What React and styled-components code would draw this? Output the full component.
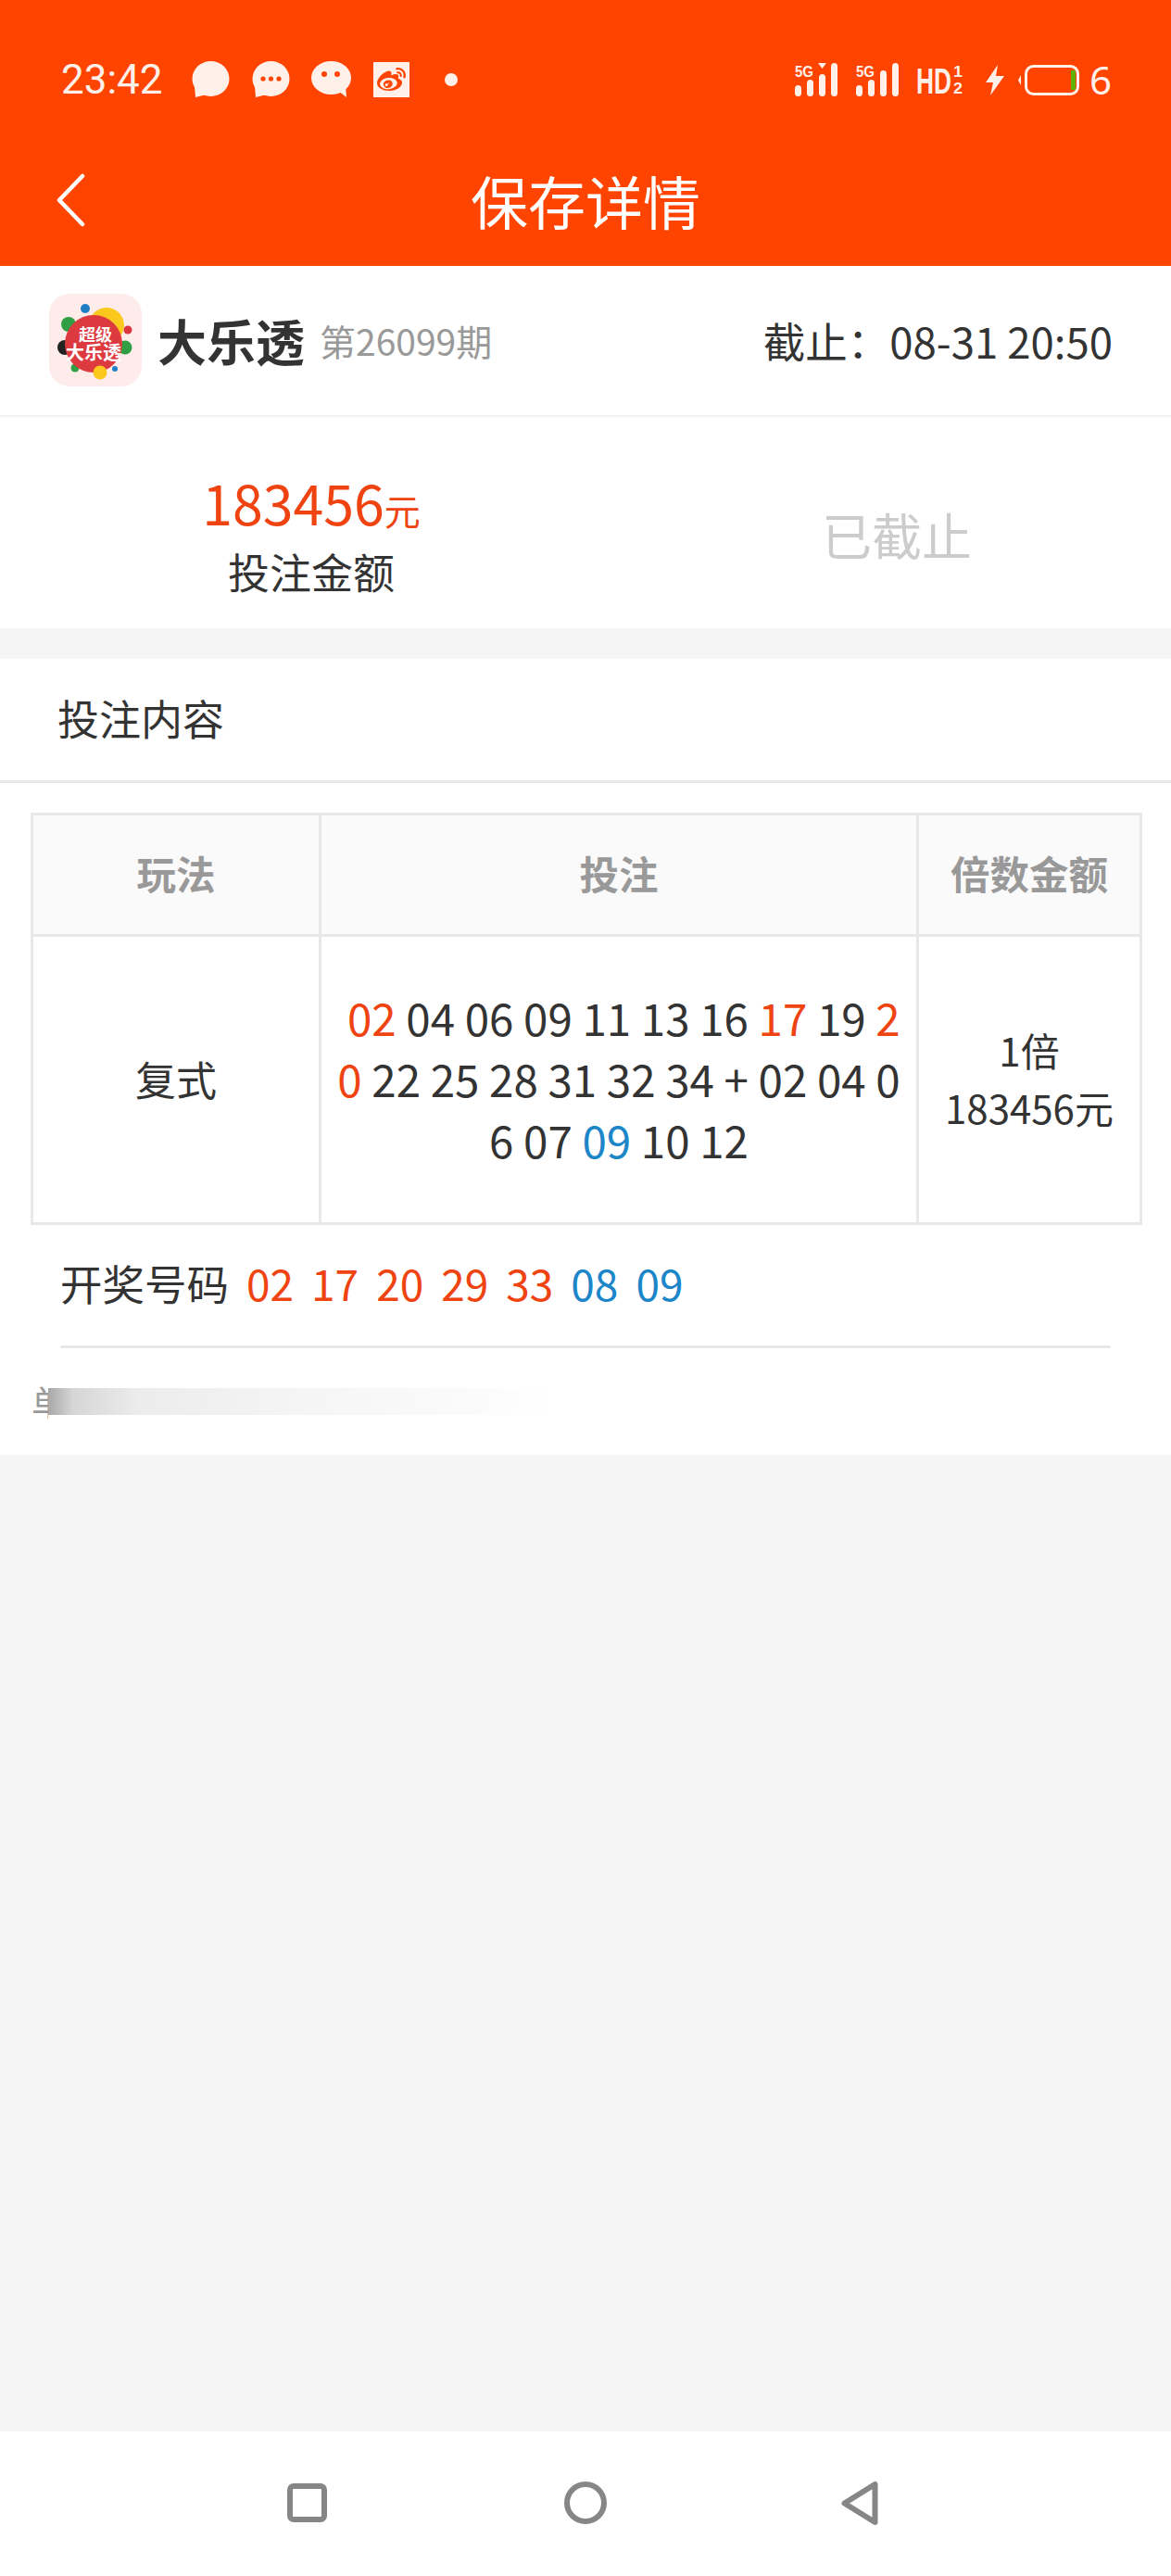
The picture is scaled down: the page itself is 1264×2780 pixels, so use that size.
import React from 'react';
import styled, { createGlobalStyle } from 'styled-components';
import { FaWeibo } from 'react-icons/fa';

const ORANGE = '#ff4400';
const RED = '#ef4311';
const BLUE = '#1c86c9';
const TINT = '#fff0ea';

const GlobalStyle = createGlobalStyle`
  html, body {
    margin: 0;
    padding: 0;
    background: #f5f5f5;
  }
  body {
    font-family: "Noto Sans CJK SC", "Noto Sans", sans-serif;
    color: #333;
  }
  * {
    box-sizing: border-box;
  }
`;

const Page = styled.div`
  display: flex;
  flex-direction: column;
  width: 1264px;
  height: 2780px;
`;

const Header = styled.header`
  background: ${ORANGE};
  height: 287px;
  flex: none;
`;

const StatusBar = styled.div`
  display: flex;
  align-items: center;
  justify-content: space-between;
  height: 172px;
  padding: 0 64px 0 66px;
`;

const StatusGroup = styled.div`
  display: flex;
  align-items: center;
`;

const Time = styled.span`
  font-family: Roboto, sans-serif;
  font-size: 44px;
  line-height: 44px;
  color: ${TINT};
  margin-right: 31px;
`;

const StatusIcon = styled.svg`
  display: block;
  flex: none;
  margin-left: ${({ $ml }) => $ml || 0}px;
`;

const WeiboBox = styled.div`
  display: flex;
  align-items: center;
  justify-content: center;
  width: 39px;
  height: 38px;
  margin-left: 23px;
  background: ${TINT};
  color: ${ORANGE};
  font-size: 31px;
`;

const Dot = styled.span`
  width: 14px;
  height: 14px;
  margin-left: 38px;
  border-radius: 50%;
  background: ${TINT};
`;

const BatteryNumber = styled.span`
  font-family: "Noto Sans", sans-serif;
  font-size: 42px;
  line-height: 42px;
  color: ${TINT};
  margin-left: 11px;
`;

const NavBar = styled.div`
  display: grid;
  grid-template-columns: 1fr auto 1fr;
  align-items: center;
  height: 115px;
  padding: 0 60px 28px;
`;

const BackIcon = styled.svg`
  display: block;
`;

const Title = styled.h1`
  margin: 0;
  font-size: 62px;
  line-height: 80px;
  font-weight: 400;
  color: #fff;
`;

const IssueRow = styled.div`
  display: flex;
  align-items: center;
  height: 163px;
  padding: 0 63px 2px 53px;
  background: #fff;
  border-bottom: 2px solid #f2f2f2;
`;

const LogoMark = styled.svg`
  display: block;
  flex: none;
  margin-right: 17px;
`;

const LotteryName = styled.strong`
  font-size: 53px;
  line-height: 70px;
  font-weight: 700;
`;

const IssueNo = styled.span`
  margin-left: 16px;
  font-size: 39px;
  line-height: 60px;
  color: #999;
`;

const Deadline = styled.span`
  margin-left: auto;
  font-size: 45.5px;
  line-height: 60px;
`;

const Summary = styled.section`
  display: grid;
  grid-template-columns: 672px 1fr;
  height: 228px;
  background: #fff;
`;

const SummaryCell = styled.div`
  display: flex;
  flex-direction: column;
  align-items: center;
  justify-content: center;
  padding-top: 25px;
`;

const Amount = styled.div`
  height: 73px;
  line-height: 73px;
  font-size: 59px;
  color: ${RED};
  white-space: nowrap;
`;

const Unit = styled.span`
  font-size: 39px;
`;

const AmountLabel = styled.div`
  margin-top: 8px;
  font-size: 45px;
  line-height: 62px;
`;

const ClosedText = styled.div`
  font-size: 54px;
  line-height: 70px;
  color: #ccc;
`;

const Content = styled.section`
  margin-top: 33px;
  height: 859px;
  flex: none;
  background: #fff;
`;

const SectionTitle = styled.h2`
  display: flex;
  align-items: center;
  height: 134px;
  margin: 0;
  padding: 0 0 4px 62px;
  font-size: 45px;
  font-weight: 400;
  border-bottom: 3px solid #e8e8e8;
`;

const BetTable = styled.div`
  display: grid;
  grid-template-columns: 311px 645px 241px;
  grid-template-rows: 131px 311px;
  width: 1200px;
  margin: 32px 0 0 33px;
  border-top: 3px solid #e8e8e8;
  border-left: 3px solid #e8e8e8;
`;

const HeadCell = styled.div`
  display: flex;
  align-items: center;
  justify-content: center;
  padding-bottom: 6px;
  background: #fafafa;
  border-right: 3px solid #e8e8e8;
  border-bottom: 3px solid #e8e8e8;
  font-size: 42.5px;
  font-weight: 700;
  color: #999;
`;

const BodyCell = styled.div`
  display: flex;
  align-items: center;
  justify-content: center;
  padding-bottom: 3px;
  border-right: 3px solid #e8e8e8;
  border-bottom: 3px solid #e8e8e8;
  font-size: 44px;
`;

const Numbers = styled.div`
  width: 616px;
  font-size: 47.5px;
  line-height: 66px;
  text-align: center;
  word-break: break-all;
`;

const Ball = styled.span`
  color: ${({ $blue }) => ($blue ? BLUE : RED)};
`;

const Stake = styled.div`
  font-size: 42px;
  line-height: 62px;
  text-align: center;
`;

const DrawRow = styled.div`
  display: flex;
  align-items: center;
  gap: 19px;
  height: 133px;
  margin: 0 65px;
  padding-bottom: 6px;
  font-size: 46px;
  border-bottom: 3px solid #e8e8e8;
`;

const DrawLabel = styled.span`
  font-size: 45.5px;
`;

const MaskRow = styled.div`
  display: flex;
  align-items: flex-start;
  padding: 38px 0 0 34px;
`;

const ClippedText = styled.span`
  width: 18px;
  height: 38px;
  overflow: hidden;
  font-size: 38px;
  line-height: 38px;
  color: #999;
  white-space: nowrap;
`;

const MaskBar = styled.div`
  width: 540px;
  height: 29px;
  margin-top: 5px;
  background: linear-gradient(90deg, #a8a8a8 0, #d6d6d6 5%, #ececec 18%, #f5f5f5 50%, #fbfbfb 85%, #fff 100%);
`;

const Filler = styled.div`
  flex: 1;
`;

const BottomNav = styled.nav`
  display: grid;
  grid-template-columns: 310px 43px 256px 46px 253px 40px;
  align-items: center;
  height: 156px;
  flex: none;
  padding-bottom: 2px;
  background: #fff;
`;

const NavIcon = styled.svg`
  display: block;
  grid-column: ${({ $col }) => $col};
`;

const Bubble = ({ ml, wide, children }) => (
  <StatusIcon $ml={ml} width={wide ? 44 : 41} height="40" viewBox={wide ? '0 0 44 40' : '0 0 41 40'}>
    {wide ? (
      <>
        <ellipse cx="21.5" cy="18" rx="21.5" ry="18" fill={TINT} />
        <path d="M29 32l9 7-1-12z" fill={TINT} />
      </>
    ) : (
      <>
        <ellipse cx="20.5" cy="19" rx="20" ry="19" fill={TINT} />
        <path d="M3 27l1 12 12-3z" fill={TINT} />
      </>
    )}
    {children}
  </StatusIcon>
);

const Signal = ({ ml, mark }) => (
  <StatusIcon $ml={ml} width="46" height="36" viewBox="0 0 46 36">
    <text x="0" y="15" fontFamily="Liberation Sans, sans-serif" fontWeight="700" fontSize="16" textLength="20" lengthAdjust="spacingAndGlyphs" fill={TINT}>5G</text>
    <rect x="0" y="24" width="7" height="12" rx="3.5" fill={TINT} />
    <rect x="13" y="18" width="7" height="18" rx="3.5" fill={TINT} />
    <rect x="26" y={mark ? 12 : 8} width="7" height={mark ? 24 : 28} rx="3.5" fill={TINT} />
    {mark && <path d="M25 0h9l-4.5 6z" fill={TINT} />}
    <rect x="39" y="0" width="7" height="36" rx="3.5" fill={TINT} />
  </StatusIcon>
);

const HdMark = ({ ml }) => (
  <StatusIcon $ml={ml} width="52" height="38" viewBox="0 0 52 38">
    <text x="0" y="34" fontFamily="Liberation Sans, sans-serif" fontWeight="700" fontSize="38" textLength="38" lengthAdjust="spacingAndGlyphs" fill={TINT}>HD</text>
    <text x="40" y="16" fontFamily="Liberation Sans, sans-serif" fontWeight="700" fontSize="16" textLength="10" lengthAdjust="spacingAndGlyphs" fill={TINT}>1</text>
    <text x="40" y="34" fontFamily="Liberation Sans, sans-serif" fontWeight="700" fontSize="16" textLength="10" lengthAdjust="spacingAndGlyphs" fill={TINT}>2</text>
  </StatusIcon>
);

const Logo = () => (
  <LogoMark width="100" height="100" viewBox="0 0 100 100">
    <rect width="100" height="100" rx="22" fill="#fdecea" />
    <circle cx="62" cy="34" r="19" fill="#fbc91e" />
    <circle cx="39" cy="16" r="5" fill="#1f7fc4" />
    <circle cx="21" cy="33" r="8" fill="#2f9e44" />
    <circle cx="85" cy="39" r="4.5" fill="#d9363e" />
    <circle cx="17" cy="58" r="8" fill="#222" />
    <circle cx="82" cy="58" r="7.5" fill="#2f9e44" />
    <circle cx="28" cy="80" r="4.5" fill="#2f9e44" />
    <circle cx="48" cy="54" r="31" fill="#dd3a3f" />
    <circle cx="55" cy="85" r="7.5" fill="#fbc91e" />
    <circle cx="71" cy="81" r="3" fill="#1f7fc4" />
    <text x="50" y="51" textAnchor="middle" fontFamily="Noto Sans CJK SC, sans-serif" fontWeight="700" fontSize="18" fill="#fff">超级</text>
    <text x="48" y="71" textAnchor="middle" fontFamily="Noto Sans CJK SC, sans-serif" fontWeight="700" fontSize="20" fill="#fff">大乐透</text>
  </LogoMark>
);

const PLAYS = ['玩法', '投注', '倍数金额'];
const WINNING = [
  { no: '02' },
  { no: '17' },
  { no: '20' },
  { no: '29' },
  { no: '33' },
  { no: '08', blue: true },
  { no: '09', blue: true },
];

const App = () => (
  <Page>
    <GlobalStyle />
    <Header>
      <StatusBar>
        <StatusGroup>
          <Time>23:42</Time>
          <Bubble />
          <Bubble ml={24}>
            <circle cx="12" cy="19" r="2.6" fill={ORANGE} />
            <circle cx="20.5" cy="19" r="2.6" fill={ORANGE} />
            <circle cx="29" cy="19" r="2.6" fill={ORANGE} />
          </Bubble>
          <Bubble ml={23} wide>
            <circle cx="14" cy="14" r="3" fill={ORANGE} />
            <circle cx="28" cy="14" r="3" fill={ORANGE} />
          </Bubble>
          <WeiboBox>
            <FaWeibo />
          </WeiboBox>
          <Dot />
        </StatusGroup>
        <StatusGroup>
          <Signal mark />
          <Signal ml={20} />
          <HdMark ml={19} />
          <StatusIcon $ml={23} width="20" height="33" viewBox="0 0 20 33">
            <path d="M13 0L0 19h8L5 33l15-21h-9z" fill={TINT} />
          </StatusIcon>
          <StatusIcon $ml={15} width="66" height="33" viewBox="0 0 66 33">
            <rect x="8.5" y="1.5" width="56" height="30" rx="8" fill="none" stroke={TINT} strokeWidth="3" />
            <rect x="57" y="6" width="5" height="21" fill="#5fb307" />
            <path d="M3 11v11l-3-5.5z" fill={TINT} />
          </StatusIcon>
          <BatteryNumber>6</BatteryNumber>
        </StatusGroup>
      </StatusBar>
      <NavBar>
        <BackIcon width="32" height="58" viewBox="0 0 32 58">
          <path d="M29 3L4 29l25 26" fill="none" stroke="#fff" strokeWidth="4.5" strokeLinecap="round" strokeLinejoin="round" />
        </BackIcon>
        <Title>保存详情</Title>
      </NavBar>
    </Header>

    <IssueRow>
      <Logo />
      <LotteryName>大乐透</LotteryName>
      <IssueNo>第26099期</IssueNo>
      <Deadline>截止：08-31 20:50</Deadline>
    </IssueRow>

    <Summary>
      <SummaryCell>
        <Amount>183456<Unit>元</Unit></Amount>
        <AmountLabel>投注金额</AmountLabel>
      </SummaryCell>
      <SummaryCell>
        <ClosedText>已截止</ClosedText>
      </SummaryCell>
    </Summary>

    <Content>
      <SectionTitle>投注内容</SectionTitle>
      <BetTable>
        {PLAYS.map((label) => (
          <HeadCell key={label}>{label}</HeadCell>
        ))}
        <BodyCell>复式</BodyCell>
        <BodyCell>
          <Numbers>
            {'\u00a0'}<Ball>02</Ball> 04 06 09 11 13 16 <Ball>17</Ball> 19 <Ball>20</Ball> 22 25 28 31 32 34 + 02 04 06 07 <Ball $blue>09</Ball> 10 12
          </Numbers>
        </BodyCell>
        <BodyCell>
          <Stake>1倍<br />183456元</Stake>
        </BodyCell>
      </BetTable>
      <DrawRow>
        <DrawLabel>开奖号码</DrawLabel>
        {WINNING.map((ball) => (
          <Ball key={ball.no} $blue={ball.blue}>{ball.no}</Ball>
        ))}
      </DrawRow>
      <MaskRow>
        <ClippedText>单</ClippedText>
        <MaskBar />
      </MaskRow>
    </Content>

    <Filler />

    <BottomNav>
      <NavIcon $col={2} width="43" height="42" viewBox="0 0 43 42">
        <rect x="3" y="3" width="37" height="36" rx="4" fill="none" stroke="#868686" strokeWidth="6" />
      </NavIcon>
      <NavIcon $col={4} width="46" height="46" viewBox="0 0 46 46">
        <circle cx="23" cy="23" r="20" fill="none" stroke="#868686" strokeWidth="6" />
      </NavIcon>
      <NavIcon $col={6} width="40" height="49" viewBox="0 0 40 49">
        <path d="M36.5 4v41L3.5 24.5z" fill="none" stroke="#868686" strokeWidth="6" strokeLinejoin="round" />
      </NavIcon>
    </BottomNav>
  </Page>
);

export default App;
